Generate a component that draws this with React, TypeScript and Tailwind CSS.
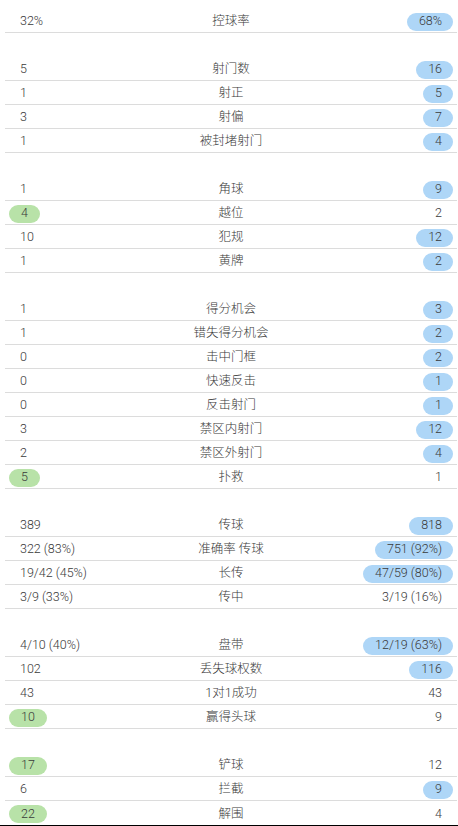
type Side = "l" | "r" | null;
type Stat = [string, string, string, Side];

// Match statistics, grouped as on the page
const groups: Stat[][] = [
  [["32%", "控球率", "68%", "r"]],
  [
    ["5", "射门数", "16", "r"],
    ["1", "射正", "5", "r"],
    ["3", "射偏", "7", "r"],
    ["1", "被封堵射门", "4", "r"],
  ],
  [
    ["1", "角球", "9", "r"],
    ["4", "越位", "2", "l"],
    ["10", "犯规", "12", "r"],
    ["1", "黄牌", "2", "r"],
  ],
  [
    ["1", "得分机会", "3", "r"],
    ["1", "错失得分机会", "2", "r"],
    ["0", "击中门框", "2", "r"],
    ["0", "快速反击", "1", "r"],
    ["0", "反击射门", "1", "r"],
    ["3", "禁区内射门", "12", "r"],
    ["2", "禁区外射门", "4", "r"],
    ["5", "扑救", "1", "l"],
  ],
  [
    ["389", "传球", "818", "r"],
    ["322 (83%)", "准确率 传球", "751 (92%)", "r"],
    ["19/42 (45%)", "长传", "47/59 (80%)", "r"],
    ["3/9 (33%)", "传中", "3/19 (16%)", null],
  ],
  [
    ["4/10 (40%)", "盘带", "12/19 (63%)", "r"],
    ["102", "丢失球权数", "116", "r"],
    ["43", "1对1成功", "43", null],
    ["10", "赢得头球", "9", "l"],
  ],
  [
    ["17", "铲球", "12", "l"],
    ["6", "拦截", "9", "r"],
    ["22", "解围", "4", "l"],
  ],
];

const StatRow = ({ stat, last }: { stat: Stat; last: boolean }) => {
  const [left, label, right, side] = stat;
  return (
    <div
      className={`ml-[5px] mr-px grid h-6 grid-cols-[1fr_auto_1fr] items-center px-[15px] pt-[2px] ${
        last ? "" : "border-b border-[#dcdcdc]"
      }`}
    >
      <div className="flex justify-start">
        {side === "l" ? (
          <span className="-ml-[11px] flex h-[18px] items-center rounded-full bg-[#b8e2a8] pl-3 pr-3">
            {left}
          </span>
        ) : (
          <span>{left}</span>
        )}
      </div>
      <div className="text-center">{label}</div>
      <div className="flex justify-end">
        {side === "r" ? (
          <span className="-mr-[11px] flex h-[18px] items-center rounded-full bg-[#aed6f7] pl-3 pr-[11px]">
            {right}
          </span>
        ) : (
          <span>{right}</span>
        )}
      </div>
    </div>
  );
};

export default function App() {
  const total = groups.length;
  return (
    <div className="flex w-[458px] flex-col gap-6 bg-white pt-[9px] text-[12.5px] font-light leading-none text-[#3a3a3a] [font-family:Roboto,'Noto_Sans_CJK_SC',sans-serif]">
      {groups.map((group, gi) => (
        <div key={gi} className="flex flex-col">
          {group.map((stat, si) => (
            <StatRow
              key={stat[1]}
              stat={stat}
              last={gi === total - 1 && si === group.length - 1}
            />
          ))}
          {gi === total - 1 && <div className="h-[2px] bg-black" />}
        </div>
      ))}
    </div>
  );
}
